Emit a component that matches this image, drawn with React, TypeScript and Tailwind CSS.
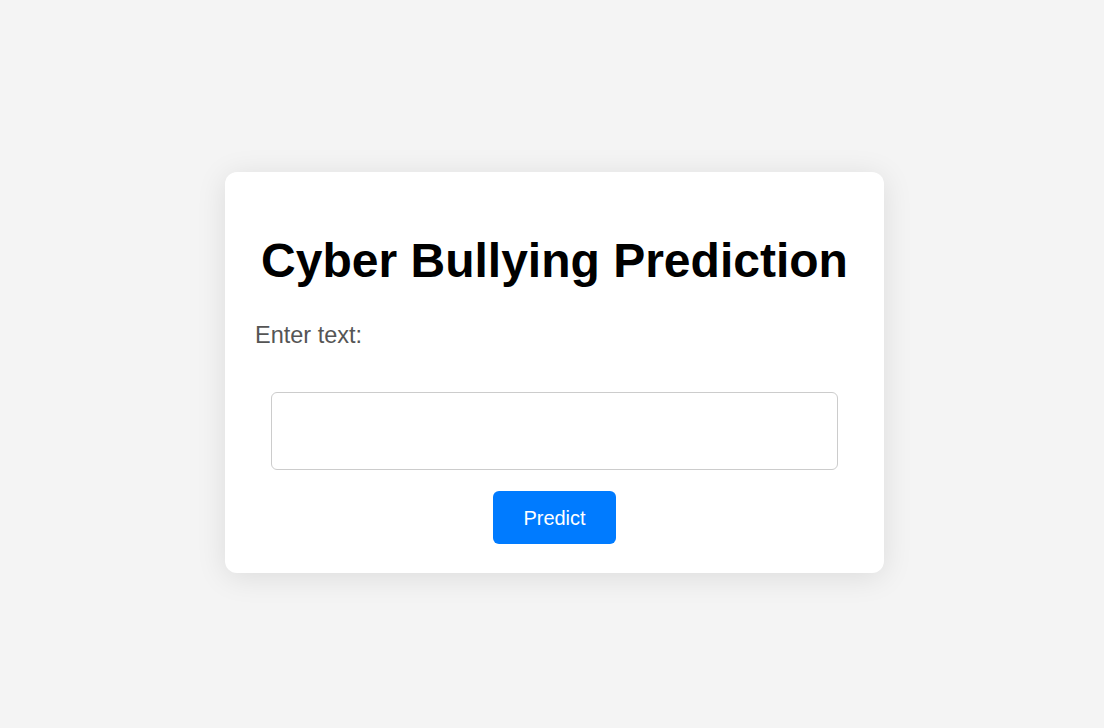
const App = () => (
  <div
    className="min-h-screen w-full bg-[#f4f4f4] flex justify-center items-start pt-[172px] pl-[5px]"
    style={{ fontFamily: '"Liberation Sans", Arial, sans-serif' }}
  >
    {/* Card */}
    <div className="w-[659px] bg-white rounded-[12px] shadow-[0_4px_30px_rgba(0,0,0,0.1)] px-[30px] pt-[61px] pb-[29px]">
      <h1 className="text-center text-[48px] leading-[55px] font-bold text-black">Cyber Bullying Prediction</h1>
      <label className="block mt-[34px] text-[23.5px] leading-[26px] text-[#555555]">Enter text:</label>
      <input
        type="text"
        className="block mx-auto mt-[44px] w-[567px] h-[78px] border border-[#cccccc] rounded-[6px] bg-white px-3 text-[16px] focus:outline-none"
      />
      <div className="flex justify-center mt-[21px]">
        <button className="h-[53px] px-[30px] bg-[#007bff] text-white text-[20px] rounded-[6px]">Predict</button>
      </div>
    </div>
  </div>
);

export default App;
